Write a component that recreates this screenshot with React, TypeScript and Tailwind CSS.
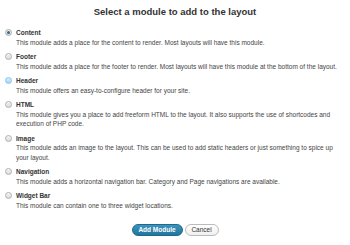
import React from "react";

const modules = [
  { name: "Content", desc: "This module adds a place for the content to render. Most layouts will have this module.", state: "checked" },
  { name: "Footer", desc: "This module adds a place for the footer to render. Most layouts will have this module at the bottom of the layout.", state: "" },
  { name: "Header", desc: "This module offers an easy-to-configure header for your site.", state: "focus" },
  { name: "HTML", desc: "This module gives you a place to add freeform HTML to the layout. It also supports the use of shortcodes and execution of PHP code.", state: "" },
  { name: "Image", desc: "This module adds an image to the layout. This can be used to add static headers or just something to spice up your layout.", state: "" },
  { name: "Navigation", desc: "This module adds a horizontal navigation bar. Category and Page navigations are available.", state: "" },
  { name: "Widget Bar", desc: "This module can contain one to three widget locations.", state: "" },
];

function Radio({ state }: { state: string }) {
  if (state === "checked") {
    return (
      <span className="w-[7px] h-[7px] rounded-full border border-[#a9a9a9] bg-gradient-to-b from-[#f4f4f4] to-[#dcdcdc] flex items-center justify-center">
        <span className="w-[3px] h-[3px] rounded-full bg-[#2b6a9a]" />
      </span>
    );
  }
  if (state === "focus") {
    return <span className="w-[7px] h-[7px] rounded-full border border-[#86c3e8] bg-gradient-to-b from-[#d8eefb] to-[#a9d6f2]" />;
  }
  return <span className="w-[7px] h-[7px] rounded-full border border-[#b0b0b0] bg-gradient-to-b from-[#f6f6f6] to-[#dadada]" />;
}

export default function App() {
  return (
    <div className="w-[350px] h-[245px] bg-white text-[#333]" style={{ fontFamily: '"Liberation Sans", Arial, sans-serif' }}>
      <div className="pt-[6px] text-center text-[9.5px] leading-[12px] font-bold text-[#333]">Select a module to add to the layout</div>
      <div className="mt-[10px] flex flex-col gap-[5px] pl-[5px] pr-[10px]">
        {modules.map((m) => (
          <div key={m.name} className="flex flex-col">
            <div className="flex items-center gap-[4px] h-[9.5px]">
              <Radio state={m.state} />
              <span className="text-[6.5px] leading-[9.5px] font-bold text-[#333]">{m.name}</span>
            </div>
            <div className="pl-[11px] text-[6.5px] leading-[9.5px] text-[#444]">{m.desc}</div>
          </div>
        ))}
      </div>
      <div className="mt-[14px] flex justify-center gap-[2px]">
        <button className="h-[12px] w-[51px] rounded-full border border-[#1e6a8d] bg-gradient-to-b from-[#3d94c0] to-[#21759b] text-white text-[6.5px] font-bold leading-none">Add Module</button>
        <button className="h-[12px] w-[34px] rounded-full border border-[#bbb] bg-gradient-to-b from-white to-[#f0f0f0] text-[#333] text-[6.5px] leading-none">Cancel</button>
      </div>
    </div>
  );
}
